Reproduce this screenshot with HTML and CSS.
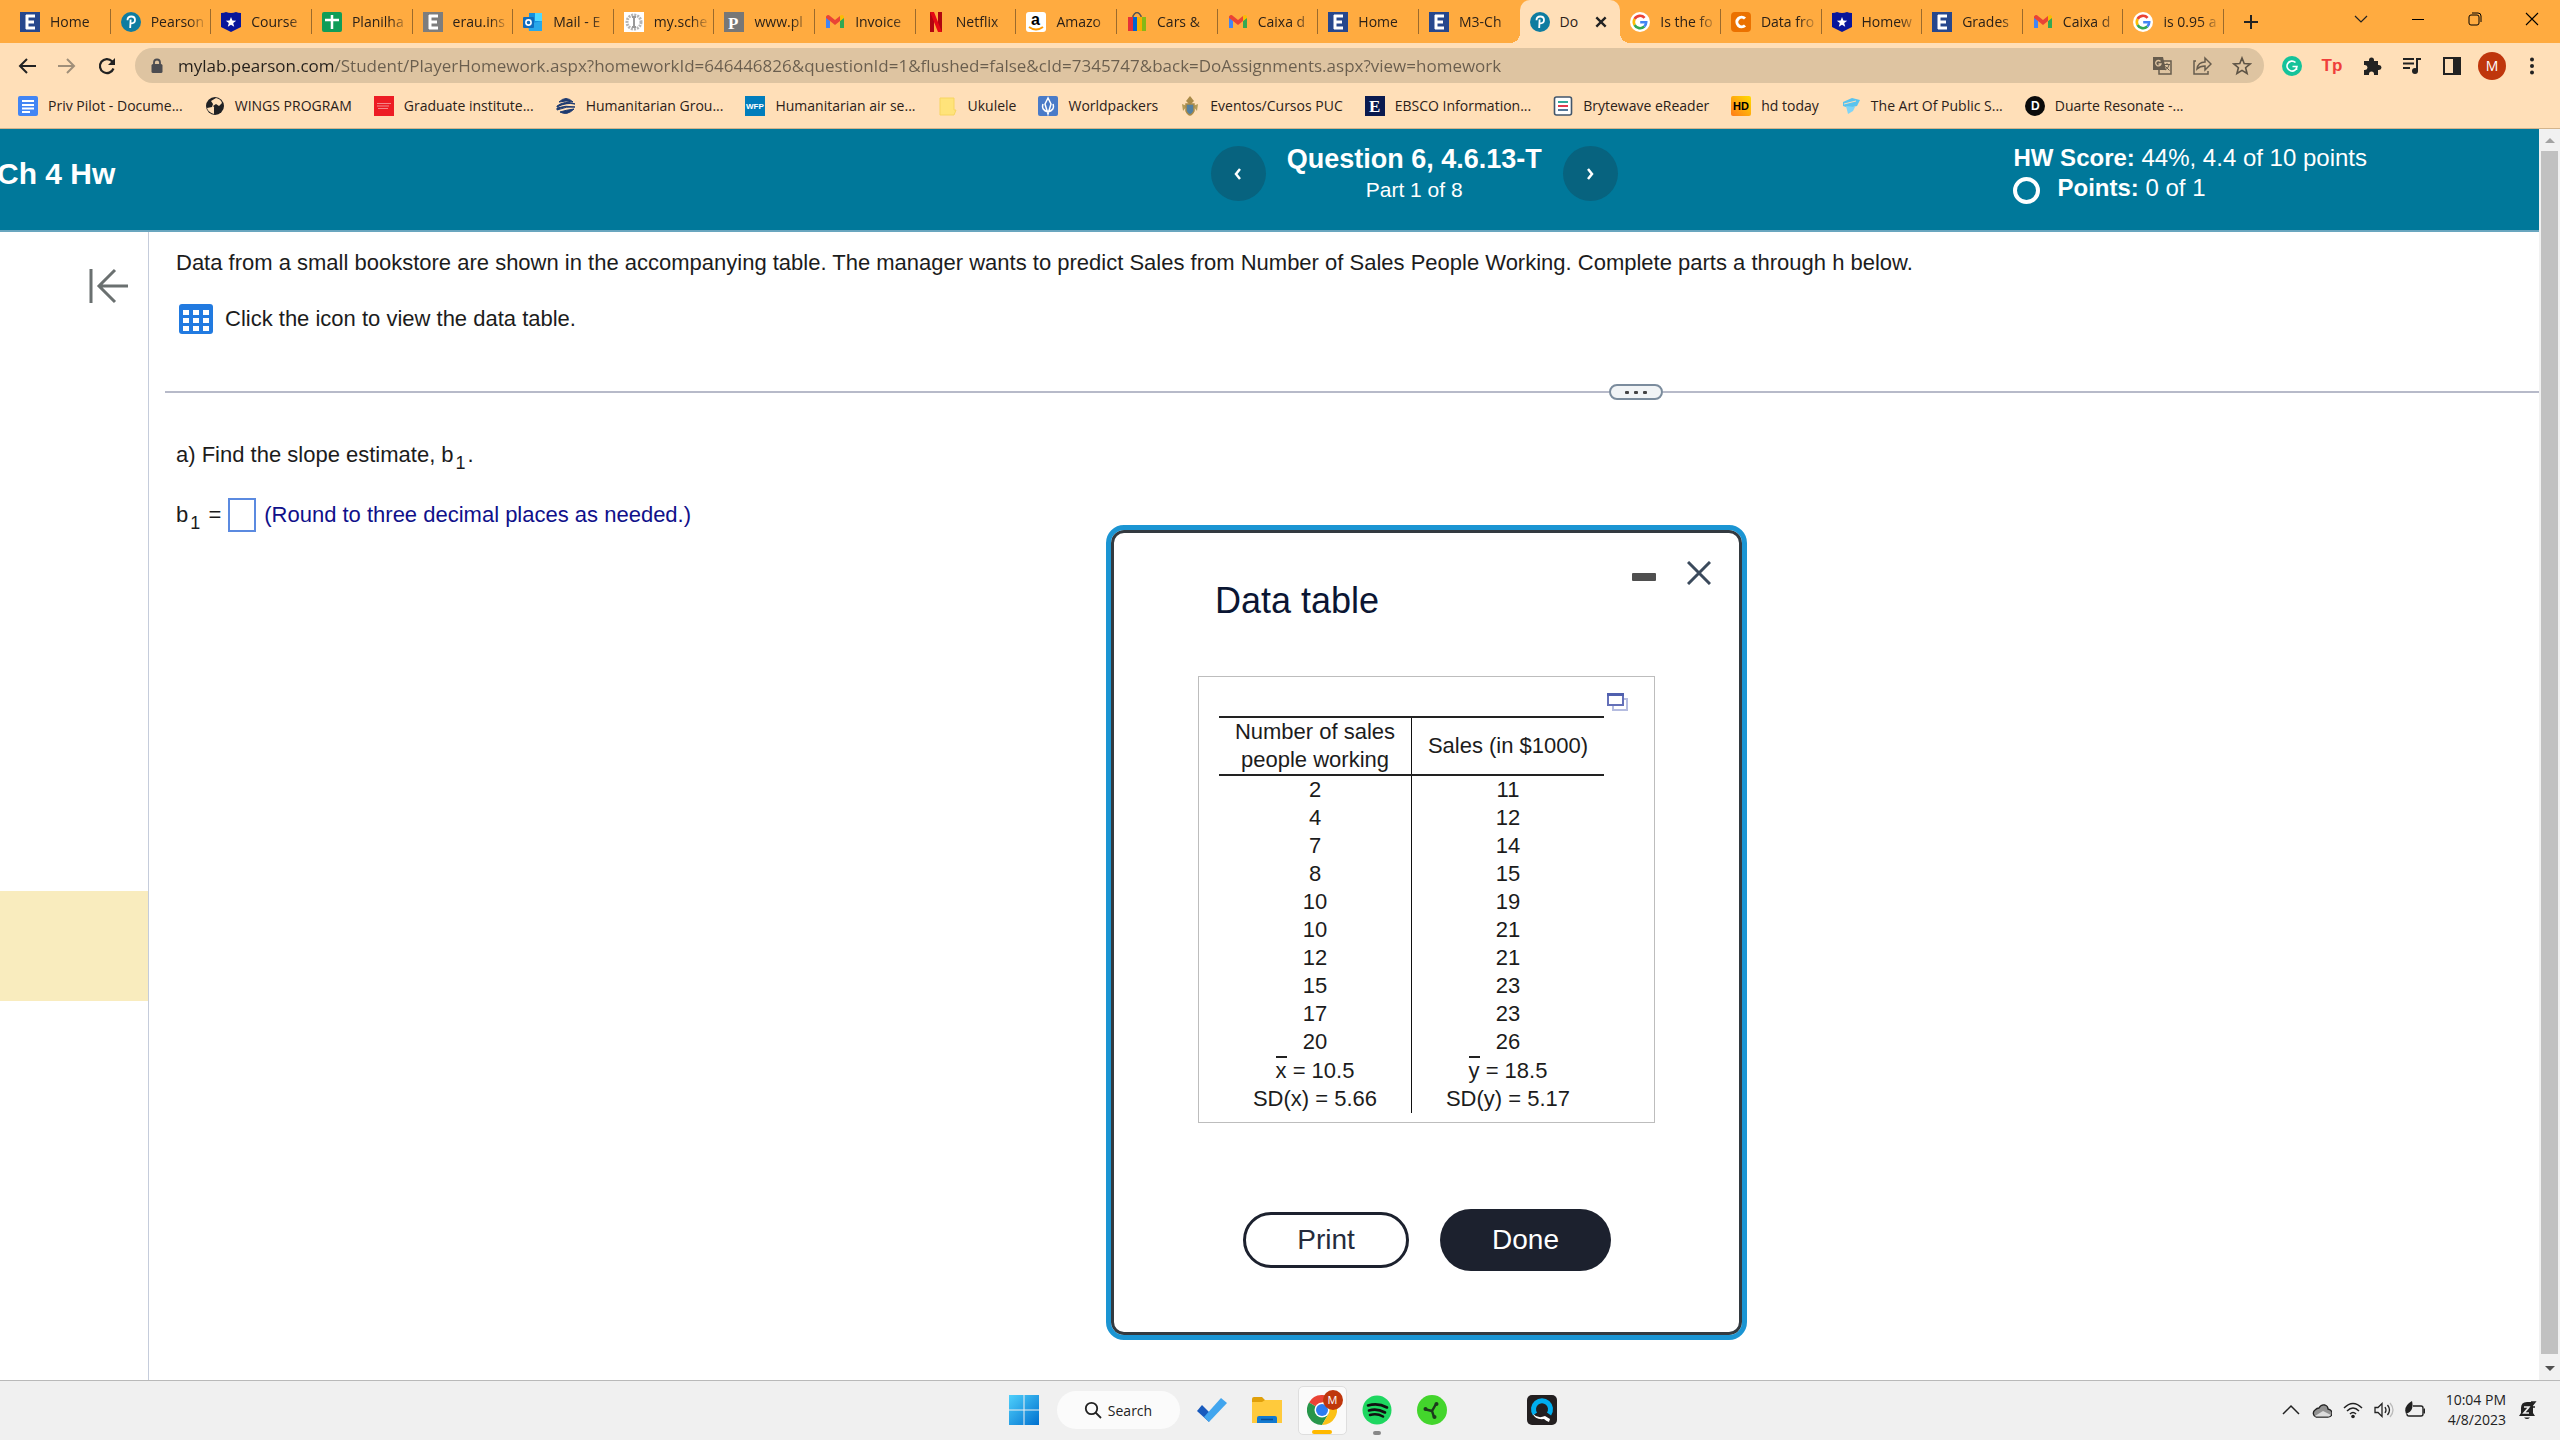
FILE: index.html
```
<!DOCTYPE html>
<html lang="en">
<head>
    <meta charset="UTF-8">
    <meta name="viewport" content="width=device-width, initial-scale=1.0">
    <title>Do Homework - Ch 4 Hw</title>
    <link rel="stylesheet" href="styles.css">
</head>
<body>
    <svg class="sprite" aria-hidden="true">
        <symbol id="i-eagle" viewBox="0 0 20 20"><rect width="20" height="20" fill="#26478d"/><path d="M6 4h9M6 10h8M6 16h9M7 3v14" stroke="#fff" stroke-width="3" fill="none"/></symbol>
        <symbol id="i-eagle-gray" viewBox="0 0 20 20"><rect width="20" height="20" fill="#7d7d7d"/><path d="M6 4h9M6 10h8M6 16h9M7 3v14" stroke="#fff" stroke-width="3" fill="none"/></symbol>
        <symbol id="i-pearson" viewBox="0 0 20 20"><circle cx="10" cy="10" r="10" fill="#0f7ca0"/><path d="M6.500 8.200Q6.500 4.500 10.300 4.500Q14 4.500 14 8Q14 11.500 9.500 11.500M9.600 7.500L9.200 16" stroke="#fff" stroke-width="1.800" fill="none"/></symbol>
        <symbol id="i-star-badge" viewBox="0 0 20 20"><path d="M0 1Q3 1 5 0Q10 2 15 0Q17 1 20 1V15L10 20L0 15Z" fill="#08169b"/><path d="M10 5l1.400 3.500 3.800.2-3 2.300 1 3.700-3.200-2-3.200 2 1-3.700-3-2.300 3.800-.2z" fill="#fff"/></symbol>
        <symbol id="i-sheets" viewBox="0 0 20 20"><rect width="20" height="20" rx="2" fill="#109d58"/><path d="M10 3v14M3 8h14" stroke="#fff" stroke-width="2.500"/></symbol>
        <symbol id="i-gmail" viewBox="0 0 20 20"><path d="M1 5v11h4V9z" fill="#4285f4"/><path d="M19 5v11h-4V9z" fill="#34a853"/><path d="M1 4.500Q3 2 5 4l5 4 5-4v5l-5 4-5-4-4-3z" fill="#ea4335"/><path d="M15 4q2-2 4 .5V6l-4 3z" fill="#fbbc04"/></symbol>
        <symbol id="i-google" viewBox="0 0 20 20"><circle cx="10" cy="10" r="10" fill="#fff"/><path d="M14.600 5.800A6.200 6.200 0 0 0 4.600 7" stroke="#ea4335" stroke-width="2.600" fill="none"/><path d="M4.600 7a6.200 6.200 0 0 0 0 6" stroke="#fbbc04" stroke-width="2.600" fill="none"/><path d="M4.600 13a6.200 6.200 0 0 0 9.700 1.500" stroke="#34a853" stroke-width="2.600" fill="none"/><path d="M14.300 14.500A6 6 0 0 0 16.200 10.200H10.200" stroke="#4285f4" stroke-width="2.600" fill="none"/></symbol>
    </svg>

    <div class="tabstrip">
        <div class="tabs">
            <div class="tab"><svg><use href="#i-eagle"/></svg><span>Home</span></div>
            <div class="tab"><svg><use href="#i-pearson"/></svg><span>Pearson</span></div>
            <div class="tab"><svg><use href="#i-star-badge"/></svg><span>Course</span></div>
            <div class="tab"><svg><use href="#i-sheets"/></svg><span>Planilha</span></div>
            <div class="tab"><svg><use href="#i-eagle-gray"/></svg><span>erau.ins</span></div>
            <div class="tab"><svg viewBox="0 0 20 20"><path d="M6 1h13v17H6z" fill="#1490df"/><path d="M12 1h7v8h-7z" fill="#50d9ff"/><path d="M5 12l14-3v10H6z" fill="#28a8ea"/><rect y="5" width="11" height="11" rx="1" fill="#0f6cbd"/><circle cx="5.500" cy="10.500" r="2.600" fill="none" stroke="#fff" stroke-width="1.600"/></svg><span>Mail - E</span></div>
            <div class="tab"><svg viewBox="0 0 20 20"><rect width="20" height="20" fill="#fff"/><circle cx="10" cy="10" r="7" fill="none" stroke="#b5b5b5" stroke-width="3" stroke-dasharray="2 1"/><path d="M10 4v12M8 5h4M8 15h4" stroke="#999" stroke-width="2"/></svg><span>my.sche</span></div>
            <div class="tab"><svg viewBox="0 0 20 20"><rect width="20" height="20" fill="#777"/><text x="4" y="17" class="serif-letter">P</text></svg><span>www.pl</span></div>
            <div class="tab"><svg><use href="#i-gmail"/></svg><span>Invoice</span></div>
            <div class="tab"><svg viewBox="0 0 20 20"><path d="M4 0h4v20H4zM12 0h4v20h-4z" fill="#b1060f"/><path d="M4 0h4l8 20h-4z" fill="#e50914"/></svg><span>Netflix</span></div>
            <div class="tab"><svg viewBox="0 0 20 20"><rect width="20" height="20" rx="3" fill="#fff"/><text x="5" y="13" class="amazon-letter">a</text><path d="M3 15q7 5 14 0" stroke="#f90" stroke-width="2" fill="none"/></svg><span>Amazo</span></div>
            <div class="tab"><svg viewBox="0 0 20 20"><path d="M6 6V4q4-7 8 0v2" stroke="#555" stroke-width="1.500" fill="none"/><path d="M1 5h5v14H1z" fill="#e53238"/><path d="M6 5h4v14H6z" fill="#0064d2"/><path d="M10 5h5v14h-5z" fill="#f5af02"/><path d="M15 5h4v14h-4z" fill="#86b817"/></svg><span>Cars &amp;</span></div>
            <div class="tab"><svg><use href="#i-gmail"/></svg><span>Caixa d</span></div>
            <div class="tab"><svg><use href="#i-eagle"/></svg><span>Home</span></div>
            <div class="tab before-active"><svg><use href="#i-eagle"/></svg><span>M3-Ch</span></div>
            <div class="tab active"><svg><use href="#i-pearson"/></svg><span>Do</span><button class="tab-close" aria-label="Close tab"><svg viewBox="0 0 12 12"><path d="M2 2l8 8M10 2l-8 8" stroke="#222" stroke-width="2"/></svg></button></div>
            <div class="tab"><svg><use href="#i-google"/></svg><span>Is the fo</span></div>
            <div class="tab"><svg viewBox="0 0 20 20"><rect width="20" height="20" rx="4" fill="#eb7100"/><path d="M14 6.500A4.800 4.800 0 1 0 14 13.500" stroke="#fff" stroke-width="3" fill="none"/></svg><span>Data fro</span></div>
            <div class="tab"><svg><use href="#i-star-badge"/></svg><span>Homew</span></div>
            <div class="tab"><svg><use href="#i-eagle"/></svg><span>Grades</span></div>
            <div class="tab"><svg><use href="#i-gmail"/></svg><span>Caixa d</span></div>
            <div class="tab"><svg><use href="#i-google"/></svg><span>is 0.95 a</span></div>
        </div>
        <button class="new-tab" aria-label="New tab"><svg viewBox="0 0 16 16"><path d="M8 1v14M1 8h14" stroke="#222" stroke-width="2"/></svg></button>
        <div class="window-controls">
            <button aria-label="Search tabs"><svg viewBox="0 0 14 14"><path d="M1 4l6 6 6-6" stroke="#222" fill="none" stroke-width="1.200"/></svg></button>
            <button aria-label="Minimize"><svg viewBox="0 0 14 14"><path d="M1 7.500h12" stroke="#000"/></svg></button>
            <button aria-label="Restore"><svg viewBox="0 0 14 14"><rect x="1" y="3" width="10" height="10" rx="2" fill="none" stroke="#000"/><path d="M4 1h6q3 0 3 3v6" fill="none" stroke="#000"/></svg></button>
            <button aria-label="Close"><svg viewBox="0 0 14 14"><path d="M1 1l12 12M13 1L1 13" stroke="#000" stroke-width="1.100"/></svg></button>
        </div>
    </div>

    <div class="toolbar">
        <button class="tool" aria-label="Back"><svg viewBox="0 0 20 20"><path d="M19 10H3M10 3l-7 7 7 7" stroke="#222" stroke-width="2" fill="none"/></svg></button>
        <button class="tool" aria-label="Forward"><svg viewBox="0 0 20 20"><path d="M1 10h16M10 3l7 7-7 7" stroke="#a08f79" stroke-width="2" fill="none"/></svg></button>
        <button class="tool" aria-label="Reload"><svg viewBox="0 0 20 20"><path d="M16.500 12.500A7 7 0 1 1 15 5.200L17 7.500" stroke="#222" stroke-width="2.200" fill="none"/><path d="M18 2v7h-7z" fill="#222"/></svg></button>
        <div class="omnibox">
            <svg class="lock" viewBox="0 0 14 16"><path d="M4 7V4.500a3 3 0 0 1 6 0V7" stroke="#4c4c50" stroke-width="1.800" fill="none"/><rect x="1.500" y="6" width="11" height="9" rx="1.500" fill="#4c4c50"/></svg>
            <input class="url" type="text" aria-label="Address" value="mylab.pearson.com/Student/PlayerHomework.aspx?homeworkId=646446826&amp;questionId=1&amp;flushed=false&amp;cId=7345747&amp;back=DoAssignments.aspx?view=homework">
            <button class="tool" aria-label="Translate"><svg viewBox="0 0 20 20"><rect x="7" y="5" width="12" height="13" fill="none" stroke="#675c4d" stroke-width="1.500"/><path d="M1 1h10l3 13H1z" fill="#675c4d"/><path d="M8.500 5.500a2.700 2.700 0 1 0 .5 2.500H6.500" stroke="#dec4a1" fill="none" stroke-width="1.300"/><path d="M12 8.500h6M15 7v1.500M17 9q-1 4-4 5M13.500 10.500l4 4" stroke="#675c4d" fill="none"/></svg></button>
            <button class="tool" aria-label="Share"><svg viewBox="0 0 20 20"><path d="M4 5H2v13h14v-3" stroke="#675c4d" stroke-width="1.500" fill="none"/><path d="M5 13q1-7 8-7V2l6 6-6 6v-4q-5 0-8 3z" stroke="#675c4d" stroke-width="1.500" fill="none"/></svg></button>
            <button class="tool" aria-label="Bookmark this page"><svg viewBox="0 0 20 20"><path d="M10 2l2.200 5.500 6 .4-4.600 3.800 1.500 5.800L10 14.400l-5.100 3.100 1.500-5.800L1.800 7.900l6-.4z" stroke="#5d5345" stroke-width="1.600" fill="none"/></svg></button>
        </div>
        <button class="tool" aria-label="Grammarly"><svg viewBox="0 0 20 20"><circle cx="10" cy="10" r="10" fill="#15c39a"/><path d="M13.500 6.500A5 5 0 1 0 15 10.500H10.500M14.500 10v4" stroke="#fff" stroke-width="1.600" fill="none"/></svg></button>
        <button class="tool tp" aria-label="Teleparty">Tp</button>
        <button class="tool" aria-label="Extensions"><svg viewBox="0 0 20 20"><path d="M2 5h5V4a2.500 2.500 0 0 1 5 0v1h4v4h1a2.500 2.500 0 0 1 0 5h-1v5h-4v-1a2.300 2.300 0 0 0-5 0v1H2v-5h1a2.300 2.300 0 0 0 0-5H2z" fill="#222"/></svg></button>
        <button class="tool" aria-label="Media controls"><svg viewBox="0 0 20 20"><path d="M1 3h11M1 7.500h11M1 12h7M15 15V3h4" stroke="#222" stroke-width="2" fill="none"/><circle cx="13" cy="15" r="3" fill="#222"/></svg></button>
        <button class="tool" aria-label="Side panel"><svg viewBox="0 0 20 20"><path d="M2 2h16v16H2z" stroke="#222" stroke-width="2" fill="none"/><path d="M11 2h7v16h-7z" fill="#222"/></svg></button>
        <button class="tool avatar" aria-label="Profile">M</button>
        <button class="tool" aria-label="Menu"><svg viewBox="0 0 20 20"><circle cx="10" cy="3.500" r="2" fill="#222"/><circle cx="10" cy="10" r="2" fill="#222"/><circle cx="10" cy="16.500" r="2" fill="#222"/></svg></button>
    </div>

    <nav class="bookmarks">
        <a href="#"><svg viewBox="0 0 20 20"><rect width="20" height="20" rx="2" fill="#4285f4"/><path d="M4 5h12M4 9h12M4 12.500h12M4 16h8" stroke="#fff" stroke-width="1.800"/></svg>Priv Pilot - Docume...</a>
        <a href="#"><svg viewBox="0 0 20 20"><circle cx="10" cy="10" r="9" fill="#202124"/><path d="M11 2q5 1 6 5l-3 3-3-2-3 2 3 3-2 5q-6-2-7-6l5-1 1-3-2-3z" fill="#ffdfb8"/><path d="M9 11l5 1-1 5-4 1z" fill="#202124"/></svg>WINGS PROGRAM</a>
        <a href="#"><svg viewBox="0 0 20 20"><rect width="20" height="20" fill="#ed1c24"/><path d="M3 7.500h14M3 10h12M4 12.500h10" stroke="#f4868a"/></svg>Graduate institute...</a>
        <a href="#"><svg viewBox="0 0 20 20"><path d="M3 6q7-7 14 0-7-2-14 0zM1 10q8-6 18-2Q10 6 1 11zM1 12q9-3 18-1-8-1-18 3zM4 16q7 4 14-3-8 1-14 3z" fill="#1d3a70" stroke="#1d3a70"/></svg>Humanitarian Grou...</a>
        <a href="#"><svg viewBox="0 0 20 20"><rect width="20" height="20" fill="#007dbc"/><text x="1" y="13" class="wfp">WFP</text></svg>Humanitarian air se...</a>
        <a href="#"><svg viewBox="0 0 20 20"><path d="M2 2h14v12h2l-2 5H2z" fill="#ffe37a" stroke="#f7d560"/></svg>Ukulele</a>
        <a href="#"><svg viewBox="0 0 20 20"><rect width="20" height="20" rx="2" fill="#4a7bc8"/><path d="M10 2l-3 6 3 10 3-10zM5 8q-2 6 5 8 7-2 5-8" stroke="#fff" stroke-width="1.500" fill="none"/></svg>Worldpackers</a>
        <a href="#"><svg viewBox="0 0 20 20"><path d="M10 0l4 5-4 4-4-4z" fill="#a98a48"/><path d="M2 8l5 2-4 5zM18 8l-5 2 4 5z" fill="#b59b58"/><path d="M6 8h8v7q-2 4-4 4t-4-4z" fill="#5480a0" stroke="#a98a48" stroke-width="1.500"/></svg>Eventos/Cursos PUC</a>
        <a href="#"><svg viewBox="0 0 20 20"><rect width="20" height="20" fill="#0a1a4f"/><text x="4" y="16" class="serif-letter">E</text></svg>EBSCO Information...</a>
        <a href="#"><svg viewBox="0 0 20 20"><rect x="1.500" y="1" width="17" height="18" rx="2" fill="#fff" stroke="#42566b" stroke-width="1.600"/><path d="M5 6h10" stroke="#3a9" stroke-width="2"/><path d="M5 10h10" stroke="#e23b4c" stroke-width="2"/><path d="M5 14h10" stroke="#579" stroke-width="2"/></svg>Brytewave eReader</a>
        <a href="#"><svg viewBox="0 0 20 20"><defs><linearGradient id="hd" x1="1" y1="0" x2="0" y2="1"><stop offset="0" stop-color="#ffdc00"/><stop offset="1" stop-color="#ff7a1a"/></linearGradient></defs><rect width="20" height="20" rx="2" fill="url(#hd)"/><text x="2" y="14" class="hd">HD</text></svg>hd today</a>
        <a href="#"><svg viewBox="0 0 20 20"><path d="M2 6l9-4 8 2-3 6-8 2-6-2z" fill="#59c3ee"/><path d="M5 10l9 1-2 4-5 3z" fill="#7ed4f7"/><path d="M3 8l12-3" stroke="#ffdfb8"/></svg>The Art Of Public S...</a>
        <a href="#"><svg viewBox="0 0 20 20"><circle cx="10" cy="10" r="10" fill="#0b0b0b"/><text x="6" y="14" class="duarte">D</text></svg>Duarte Resonate -...</a>
    </nav>

    <div class="viewport">
        <div class="page">
            <header class="hw-header">
                <h1>Ch 4 Hw</h1>
                <div class="question-nav">
                    <button class="round" aria-label="Previous question"><svg viewBox="0 0 12 16"><path d="M8 3L4 8l4 5" stroke="#fff" stroke-width="2.500" fill="none"/></svg></button>
                    <div class="question">
                        <h2>Question 6, 4.6.13-T</h2>
                        <p>Part 1 of 8</p>
                    </div>
                    <button class="round" aria-label="Next question"><svg viewBox="0 0 12 16"><path d="M4 3l4 5-4 5" stroke="#fff" stroke-width="2.500" fill="none"/></svg></button>
                </div>
                <div class="score">
                    <p><b>HW Score:</b> 44%, 4.4 of 10 points</p>
                    <p class="points"><span class="ring"></span><span><b>Points:</b> 0 of 1</span></p>
                </div>
            </header>

            <div class="workspace">
                <aside class="sidebar">
                    <button class="collapse" aria-label="Collapse"><svg viewBox="0 0 40 36"><path d="M2 1v34M39 18H10M26 2L10 18l16 16" stroke="#6a7070" stroke-width="3" fill="none"/></svg></button>
                    <div class="current-item"></div>
                </aside>

                <main class="exercise">
                    <p class="text">Data from a small bookstore are shown in the accompanying table. The manager wants to predict Sales from Number of Sales People Working. Complete parts a through h below.</p>
                    <div class="row data-link">
                        <button class="grid-icon" aria-label="View the data table"><svg viewBox="0 0 34 30"><rect width="34" height="30" rx="3" fill="#217ae0"/><path d="M4 6h6v5H4zM14 6h6v5h-6zM24 6h6v5h-6zM4 14h6v5H4zM14 14h6v5h-6zM24 14h6v5h-6zM4 22h6v5H4zM14 22h6v5h-6zM24 22h6v5h-6z" fill="#fff"/></svg></button>
                        <span>Click the icon to view the data table.</span>
                    </div>
                    <div class="divider">
                        <button aria-label="Resize"><i></i><i></i><i></i></button>
                    </div>
                    <p class="text">a) Find the slope estimate, b<sub>1</sub>.</p>
                    <div class="row answer">
                        <label for="b1">b<sub>1</sub> =</label>
                        <input type="text" id="b1">
                        <span class="hint">(Round to three decimal places as needed.)</span>
                    </div>
                </main>
            </div>

            <div class="dialog" role="dialog" aria-labelledby="dialogTitle">
                <div class="dialog-head">
                    <h3 id="dialogTitle">Data table</h3>
                    <div class="dialog-controls">
                        <button aria-label="Minimize dialog"><svg viewBox="0 0 24 24"><rect y="12" width="24" height="8" rx="1" fill="#4f4f4f"/></svg></button>
                        <button aria-label="Close dialog"><svg viewBox="0 0 24 24"><path d="M1 1l22 22M23 1L1 23" stroke="#3b4a5c" stroke-width="3"/></svg></button>
                    </div>
                </div>
                <div class="table-box">
                    <table>
                        <thead>
                            <tr><th>Number of sales<br>people working</th><th>Sales (in $1000)</th></tr>
                        </thead>
                        <tbody>
                            <tr><td>2</td><td>11</td></tr>
                            <tr><td>4</td><td>12</td></tr>
                            <tr><td>7</td><td>14</td></tr>
                            <tr><td>8</td><td>15</td></tr>
                            <tr><td>10</td><td>19</td></tr>
                            <tr><td>10</td><td>21</td></tr>
                            <tr><td>12</td><td>21</td></tr>
                            <tr><td>15</td><td>23</td></tr>
                            <tr><td>17</td><td>23</td></tr>
                            <tr><td>20</td><td>26</td></tr>
                            <tr><td><span class="bar">x</span> = 10.5</td><td><span class="bar">y</span> = 18.5</td></tr>
                            <tr><td>SD(x) = 5.66</td><td>SD(y) = 5.17</td></tr>
                        </tbody>
                    </table>
                    <button class="copy" aria-label="Copy table"><svg viewBox="0 0 22 20"><rect x="6" y="7" width="14" height="11" fill="#fff" stroke="#b5bce0" stroke-width="2"/><rect x="1" y="2" width="15" height="11" fill="#fff" stroke="#6470b8" stroke-width="2"/><path d="M0 2.500h17" stroke="#5060ae" stroke-width="3"/></svg></button>
                </div>
                <div class="dialog-buttons">
                    <button class="print">Print</button>
                    <button class="done">Done</button>
                </div>
            </div>
        </div>
        <div class="scrollbar">
            <svg viewBox="0 0 20 22"><path d="M5 14l5-5 5 5z" fill="#a3a3a3"/></svg>
            <div class="thumb"></div>
            <svg viewBox="0 0 20 22"><path d="M5 8l5 5 5-5z" fill="#505050"/></svg>
        </div>
    </div>

    <footer class="taskbar">
        <div class="apps">
            <button class="app" aria-label="Start"><svg viewBox="0 0 30 30"><defs><linearGradient id="win" x1="0" y1="0" x2="1" y2="1"><stop offset="0" stop-color="#4fd0fb"/><stop offset="1" stop-color="#0070cf"/></linearGradient></defs><path d="M0 0h14.500v14.500H0zM15.500 0H30v14.500H15.500zM0 15.500h14.500V30H0zM15.500 15.500H30V30H15.500z" fill="url(#win)"/></svg></button>
            <button class="search"><svg viewBox="0 0 18 18"><circle cx="7.500" cy="7.500" r="5.700" stroke="#222" stroke-width="1.800" fill="none"/><path d="M11.500 11.500L17 17" stroke="#222" stroke-width="1.800"/></svg>Search</button>
            <button class="app" aria-label="To Do"><svg viewBox="0 0 30 30"><path d="M0 16l5-6 8 8-1 9z" fill="#185abd"/><path d="M7 22L24 3l6 5-18 19z" fill="#41a5ee"/></svg></button>
            <button class="app" aria-label="File Explorer"><svg viewBox="0 0 30 30"><path d="M0 4q0-2 2-2h8l3 3h17v8H0z" fill="#e0a00a"/><path d="M0 7h10l3-2h17v23H0z" fill="#ffca3c"/><path d="M5 28v-5q0-2 2-2h16q2 0 2 2v5z" fill="#1279d0"/><path d="M9 24.500h12" stroke="#0a4c94" stroke-width="1.500"/></svg></button>
            <button class="app running" aria-label="Chrome"><svg viewBox="0 0 30 30"><path d="M15 15L2 7.500A15 15 0 0 1 28 7.500H15z" fill="#ea4335"/><path d="M15 15L2 7.500A15 15 0 0 0 15 30l7-12z" fill="#27964a"/><path d="M15 15l7 3-7 12A15 15 0 0 0 28 7.500H15z" fill="#fbc116"/><circle cx="15" cy="15" r="7.500" fill="#fff"/><circle cx="15" cy="15" r="6" fill="#2d7cf0"/></svg><span class="badge">M</span></button>
            <button class="app idle" aria-label="Spotify"><svg viewBox="0 0 30 30"><circle cx="15" cy="15" r="14.500" fill="#1ed760"/><path d="M6 10.500q10-3 19 2M7 15.500q8-2.500 16 2M8 20q7-2 13 1.500" stroke="#111" stroke-width="2.600" stroke-linecap="round" fill="none"/></svg></button>
            <button class="app" aria-label="Graph app"><svg viewBox="0 0 30 30"><circle cx="15" cy="15" r="15" fill="#43d52c"/><path d="M9 14.500l6 1.500 4-7M15 16l2 6" stroke="#1c3a1c" stroke-width="2.400" fill="none"/><circle cx="8.500" cy="14" r="2" fill="#1c3a1c"/><circle cx="19.500" cy="9" r="2" fill="#1c3a1c"/><circle cx="17.500" cy="22" r="2" fill="#1c3a1c"/></svg></button>
            <span class="app"></span>
            <button class="app" aria-label="Quik"><svg viewBox="0 0 30 30"><rect width="30" height="30" rx="5" fill="#231f20"/><path d="M8 19a8.500 8.500 0 1 1 14 0" stroke="#00aeef" stroke-width="5" fill="none"/><path d="M6 19q5 5 12 2l5 3-1 3q-3-1-5-3-9 1-11-5z" fill="#fff"/></svg></button>
        </div>
        <div class="tray">
            <svg viewBox="0 0 20 20"><path d="M2 14l8-8 8 8" stroke="#222" stroke-width="1.500" fill="none"/></svg>
            <svg viewBox="0 0 20 20"><path d="M4 17a4 4 0 0 1-1-7q2-2 4-2 2-4 6-3 3 1 3 4 4 1 4 4 0 4-4 4z" fill="#929292" stroke="#222" stroke-width="1.300"/><path d="M3 16l8-5 8 4-2 1.500H4z" fill="#ddd"/></svg>
            <svg viewBox="0 0 20 20"><path d="M1 8q9-9 18 0M4 11q6-6 12 0M7 14q3-3 6 0" stroke="#222" stroke-width="1.500" fill="none"/><circle cx="10" cy="16.500" r="1.800" fill="#222"/></svg>
            <svg viewBox="0 0 20 20"><path d="M1 7.500h3l4-4v13l-4-4H1z" stroke="#222" stroke-width="1.300" fill="none"/><path d="M11 7q2 3 0 6M13.500 5q4 5 0 10" stroke="#222" stroke-width="1.300" fill="none"/><path d="M16 3q6 7 0 14" stroke="#bbb" stroke-width="1.300" fill="none"/></svg>
            <svg viewBox="0 0 20 20"><path d="M8 6h8q2 0 2 2v6q0 2-2 2H4q-2 0-2-2" stroke="#222" stroke-width="1.400" fill="none"/><path d="M19 9h1v4h-1z" fill="#222" stroke="#222"/><path d="M1 14Q-2 6 7 1q2 9-4 12z" fill="#222"/></svg>
            <div class="clock">10:04 PM<br>4/8/2023</div>
            <svg viewBox="0 0 20 20"><path d="M2 16l2-3V8q0-6 6-6h6v11l2 3z" fill="#222"/><path d="M7 17.500q3 3 6 0z" fill="#222"/><path d="M7 7h5l-5 6h5" stroke="#eee" stroke-width="1.700" fill="none"/><path d="M14 2h4l-4 5h4" stroke="#222" stroke-width="1.500" fill="none"/></svg>
        </div>
    </footer>
</body>
</html>
```
FILE: styles.css
```
*{
    margin: 0;
    padding: 0;
    box-sizing: border-box;
}
body{
    display: flex;
    flex-direction: column;
    height: 100vh;
    overflow: hidden;
    font-family: "Liberation Sans", Arial, sans-serif;
    font-size: 22px;
    color: #1c1c1c;
    background: white;
}
button{
    border: none;
    background: none;
    font-family: inherit;
    cursor: pointer;
}
svg{
    display: block;
    flex-shrink: 0;
}
.sprite{
    position: absolute;
    width: 0;
    height: 0;
}

/* browser */
.tabstrip, .toolbar, .bookmarks, .taskbar{
    flex-shrink: 0;
    display: flex;
    align-items: center;
    font-family: "Open Sans", "Noto Sans", sans-serif;
    font-size: 14px;
    color: #2b2118;
}
.tabstrip{
    height: 43px;
    padding-left: 10px;
    background: #ffab40;
}
.tabs{
    display: flex;
    flex: 1;
    min-width: 0;
    height: 100%;
}
.tab{
    position: relative;
    display: flex;
    align-items: center;
    flex: 1;
    min-width: 0;
    gap: 10px;
    padding-left: 10px;
}
.tab > svg{
    width: 20px;
    height: 20px;
}
.tab span{
    flex: 1;
    min-width: 0;
    margin-right: -8px;
    overflow: hidden;
    white-space: nowrap;
    mask-image: linear-gradient(90deg, black 65%, transparent);
}
.tab::after{
    content: "";
    width: 1px;
    height: 25px;
    background: #9b6a2c;
}
.tab.before-active::after{
    background: none;
}
.tab.active{
    background: #ffdfb8;
    border-radius: 10px 10px 0 0;
}
.tab.active span{
    margin-right: 0;
    mask-image: none;
}
.tab.active::after{
    display: none;
}
.tab.active::before{
    content: "";
    position: absolute;
    bottom: 0;
    left: -10px;
    right: -10px;
    height: 10px;
    background: radial-gradient(circle at 0 0, transparent 10px, #ffdfb8 10px) left / 10px 10px no-repeat,
        radial-gradient(circle at 100% 0, transparent 10px, #ffdfb8 10px) right / 10px 10px no-repeat;
}
.tab-close{
    margin-right: 12px;
}
.tab-close svg{
    width: 14px;
    height: 14px;
}
.new-tab{
    width: 54px;
    margin-right: 54px;
}
.new-tab svg{
    width: 16px;
    height: 16px;
    margin: 0 auto;
}
.window-controls{
    display: flex;
    height: 37px;
    align-self: flex-start;
}
.window-controls button{
    width: 57px;
}
.window-controls svg{
    width: 14px;
    height: 14px;
    margin: 0 auto;
}
.toolbar{
    height: 45px;
    padding: 0 8px 0 7px;
    background: #ffdfb8;
}
.tool{
    display: flex;
    justify-content: center;
    width: 40px;
    flex-shrink: 0;
}
.tool svg{
    width: 20px;
    height: 20px;
}
.omnibox{
    display: flex;
    align-items: center;
    flex: 1;
    height: 35px;
    margin: 0 8px;
    padding: 0 2px 0 15px;
    border-radius: 18px;
    background: #dec4a1;
}
.lock{
    width: 14px;
    height: 16px;
    margin-right: 14px;
}
.url{
    flex: 1;
    border: none;
    outline: none;
    font-family: inherit;
    font-size: 17px;
    color: transparent;
    background: linear-gradient(90deg, #241f1a 156px, #6a5e4e 156px);
    background-clip: text;
    -webkit-background-clip: text;
}
.tp{
    font-family: "Liberation Sans", Arial, sans-serif;
    font-size: 17px;
    font-weight: 700;
    color: #ef3e3a;
}
.avatar{
    align-items: center;
    width: 28px;
    height: 28px;
    margin: 0 6px;
    border-radius: 50%;
    font-size: 14px;
    color: white;
    background: #bf360c;
}
.bookmarks{
    height: 41px;
    padding: 0 18px 5px;
    gap: 22px;
    background: #ffdfb8;
    border-bottom: 1px solid #d3b48c;
}
.bookmarks a{
    display: flex;
    align-items: center;
    gap: 10px;
    white-space: nowrap;
    text-decoration: none;
    color: #2b2118;
}
.bookmarks svg{
    width: 20px;
    height: 20px;
}
.serif-letter{
    font: 700 17px "Liberation Serif", serif;
    fill: white;
}
.amazon-letter{
    font: 700 16px "Liberation Sans", sans-serif;
}
.wfp{
    font: 700 8px "Liberation Sans", sans-serif;
    fill: white;
}
.hd{
    font: 700 11px "Liberation Sans", sans-serif;
}
.duarte{
    font: 700 12px "Liberation Sans", sans-serif;
    fill: white;
}

/* page */
.viewport{
    display: flex;
    flex: 1;
    min-height: 0;
}
.page{
    position: relative;
    display: flex;
    flex-direction: column;
    flex: 1;
    min-width: 0;
}
.hw-header{
    display: flex;
    align-items: center;
    height: 103px;
    padding-bottom: 12px;
    color: white;
    background: #00789a;
    border-bottom: 2px solid #69a6bf;
}
.hw-header h1{
    width: 47.8%;
    margin-left: -3px;
    font-size: 30px;
}
.question-nav{
    display: flex;
    align-items: center;
    gap: 21px;
}
.round{
    width: 55px;
    height: 55px;
    border-radius: 50%;
    background: #07637f;
}
.round svg{
    width: 12px;
    height: 16px;
    margin: 0 auto;
}
.question{
    text-align: center;
}
.question h2{
    font-size: 27px;
    line-height: 32px;
}
.question p{
    font-size: 21px;
    line-height: 30px;
}
.score{
    margin-left: auto;
    padding-right: 172px;
    font-size: 24px;
    line-height: 30px;
}
.points{
    display: flex;
    align-items: flex-start;
    gap: 17px;
}
.ring{
    width: 27px;
    height: 27px;
    margin-top: 4px;
    border: 4px solid white;
    border-radius: 50%;
}
.workspace{
    display: flex;
    flex: 1;
}
.sidebar{
    width: 149px;
    padding-top: 36px;
    border-right: 1px solid #c5ccdb;
}
.collapse{
    margin-left: 89px;
}
.collapse svg{
    width: 40px;
    height: 36px;
}
.current-item{
    height: 110px;
    margin-top: 581px;
    background: #f9ecbe;
}
.exercise{
    flex: 1;
    padding-top: 18px;
    padding-left: 16px;
}
.text, .row{
    padding-left: 11px;
    line-height: 26px;
}
.row{
    display: flex;
    align-items: center;
    height: 34px;
}
.data-link{
    gap: 12px;
    margin: 26px 0 48px;
    padding-left: 14px;
}
.grid-icon svg{
    width: 34px;
    height: 30px;
}
.divider{
    display: flex;
    align-items: center;
    margin-bottom: 42px;
}
.divider::before, .divider::after{
    content: "";
    flex: 56;
    height: 2px;
    background: #b7bac9;
}
.divider::after{
    flex: 34;
}
.divider button{
    display: flex;
    align-items: center;
    justify-content: center;
    gap: 5px;
    width: 54px;
    height: 16px;
    border: 2px solid #7b8c9d;
    border-radius: 8px;
    background: #f1f4f6;
}
.divider i{
    width: 4px;
    height: 3px;
    border-radius: 1px;
    background: #444;
}
sub{
    margin: 0 2px;
    font-size: 18px;
    line-height: 0;
    vertical-align: -7px;
}
.answer{
    margin-top: 30px;
}
.answer label{
    flex-shrink: 0;
}
.answer input{
    width: 28px;
    height: 34px;
    margin: 0 8px 0 7px;
    border: 2px solid #5b8ae0;
    font-size: 22px;
}
.hint{
    color: #10108a;
}

/* dialog */
.dialog{
    position: absolute;
    top: 396px;
    left: 1106px;
    width: 641px;
    padding: 31px 31px 64px 87px;
    border: 5px solid #1b95d3;
    border-radius: 18px;
    background: white;
    box-shadow: inset 0 0 0 3px #333a40;
}
.dialog-head{
    display: flex;
    justify-content: space-between;
    margin-bottom: 55px;
}
.dialog-head h3{
    padding: 20px 0 0 17px;
    font-size: 36px;
    font-weight: 400;
    line-height: 40px;
    color: #0b1633;
}
.dialog-controls{
    display: flex;
    gap: 31px;
}
.dialog-controls button{
    height: 24px;
}
.dialog-controls svg{
    width: 24px;
    height: 24px;
}
.table-box{
    display: flex;
    align-items: flex-start;
    width: 457px;
    padding: 39px 0 9px 20px;
    border: 1px solid #bdbdbd;
}
table{
    width: 385px;
    table-layout: fixed;
    border-collapse: collapse;
    border-top: 2px solid #222;
    text-align: center;
}
th{
    height: 57px;
    font-weight: 400;
    line-height: 28px;
    border-bottom: 2px solid #222;
}
td{
    line-height: 28px;
}
th:first-child, td:first-child{
    border-right: 1px solid #111;
}
.bar{
    display: inline-block;
    line-height: 26px;
    border-top: 2px solid #222;
}
.copy{
    margin-top: -24px;
    margin-left: 3px;
}
.copy svg{
    width: 22px;
    height: 20px;
}
.dialog-buttons{
    display: flex;
    align-items: center;
    justify-content: center;
    gap: 31px;
    margin: 86px 55px 0 0;
}
.dialog-buttons button{
    font-size: 28px;
}
.print{
    width: 166px;
    height: 56px;
    border: 3px solid #1c212e;
    border-radius: 28px;
    color: #252b3c;
}
.done{
    width: 171px;
    height: 62px;
    border-radius: 31px;
    color: white;
    background: #1c212e;
}
.scrollbar{
    display: flex;
    flex-direction: column;
    align-items: center;
    width: 21px;
    background: #f1f1f1;
}
.scrollbar svg{
    width: 20px;
    height: 22px;
}
.thumb{
    flex: 1;
    width: 17px;
    margin-bottom: 4px;
    background: #c1c1c1;
}

/* taskbar */
.taskbar{
    height: 60px;
    padding-bottom: 1px;
    border-top: 1px solid #b9b9b9;
    background: #f0f0f0;
}
.apps{
    display: flex;
    align-items: center;
    flex: 1;
    justify-content: center;
    padding-left: 285px;
}
.app{
    position: relative;
    width: 49px;
    height: 49px;
    margin: 0 3px;
    border-radius: 5px;
}
.app > svg{
    width: 30px;
    height: 30px;
    margin: 0 auto;
}
.search{
    display: flex;
    align-items: center;
    justify-content: center;
    gap: 6px;
    width: 123px;
    height: 38px;
    margin: 0 5px;
    border-radius: 19px;
    font-size: 14px;
    color: #222;
    background: #fbfbfb;
}
.search svg{
    width: 18px;
    height: 18px;
}
.running{
    background: #fafafa;
    border: 1px solid #dedede;
}
.running::after, .idle::after{
    content: "";
    position: absolute;
    bottom: 0;
    left: 50%;
    width: 20px;
    height: 4px;
    margin-left: -10px;
    border-radius: 2px;
    background: #ffb900;
}
.idle::after{
    width: 8px;
    margin-left: -4px;
    background: #888;
}
.badge{
    position: absolute;
    top: 3px;
    right: 3px;
    width: 20px;
    height: 20px;
    border-radius: 50%;
    font-size: 11px;
    line-height: 20px;
    color: white;
    background: #bf360c;
}
.tray{
    display: flex;
    align-items: center;
    gap: 11px;
    padding-right: 23px;
}
.tray svg{
    width: 20px;
    height: 20px;
}
.clock{
    width: 70px;
    text-align: right;
    line-height: 20px;
    white-space: nowrap;
    color: #222;
}
```
